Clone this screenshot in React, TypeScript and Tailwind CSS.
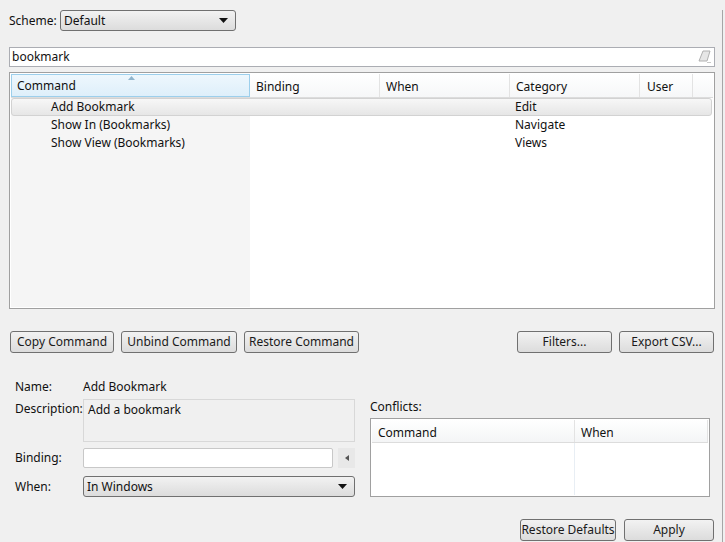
import React from 'react';

const font = { fontFamily: '"Noto Sans", "Open Sans", "Liberation Sans", sans-serif' };

const Btn = ({ label, w }: { label: string; w: string }) => (
  <button
    className={`${w} h-[22px] rounded-[3px] border border-[#707070] bg-gradient-to-b from-[#f2f2f2] to-[#dcdcdc] text-[12px] text-[#1a1a1a] leading-none`}
  >
    {label}
  </button>
);

const Caret = () => (
  <svg width="9" height="5" viewBox="0 0 9 5">
    <path d="M0 0h9L4.5 5z" fill="#111" />
  </svg>
);

const Select = ({ value, w }: { value: string; w: string }) => (
  <div
    className={`${w} h-[21px] rounded-[3px] border border-[#707070] bg-gradient-to-b from-[#f2f2f2] to-[#dcdcdc] flex items-center justify-between pl-[3px] pr-[7px] text-[12px]`}
  >
    <span>{value}</span>
    <Caret />
  </div>
);

const rows = [
  { cmd: 'Add Bookmark', cat: 'Edit', sel: true },
  { cmd: 'Show In (Bookmarks)', cat: 'Navigate' },
  { cmd: 'Show View (Bookmarks)', cat: 'Views' },
];

export default function App() {
  return (
    <div className="w-[725px] h-[542px] overflow-hidden bg-[#f0f0f0] text-[#111]" style={font}>
      <div className="w-[723px] h-full border-r border-[#a6a6a6] pl-[9px] pr-[7px]">
        {/* scheme */}
        <div className="flex items-center h-[21px] mt-[10px] text-[12px]">
          <span className="w-[51px]">Scheme:</span>
          <Select value="Default" w="w-[176px]" />
        </div>

        {/* filter */}
        <div className="mt-[16px] h-[20px] border border-[#abadb3] bg-white flex items-center justify-between pl-[2px] pr-[2px] text-[12px]">
          <span>bookmark</span>
          <svg width="14" height="14" viewBox="0 0 14 14">
            <path d="M5 1h7l-3 10H1z" fill="#e6e6e6" stroke="#b0b0b0" strokeWidth="1" />
            <path d="M9 12.5h4" stroke="#c8c8c8" />
          </svg>
        </div>

        {/* commands table */}
        <div className="mt-[5px] h-[237px] border border-[#a0a0a0] bg-white p-px flex flex-col text-[12px]">
          <div className="flex h-[24px] bg-gradient-to-b from-white to-[#f6f7f8] border-b border-[#dcdcdc]">
            <div className="relative w-[239px] flex items-end pb-[1px] pl-[5px] bg-gradient-to-b from-[#eef7fd] to-[#deeffa] border border-[#9ccfec]">
              Command
              <svg className="absolute left-[116px] top-[1px]" width="7" height="4" viewBox="0 0 7 4">
                <path d="M0 4L3.5 0L7 4z" fill="#8fb4cc" />
              </svg>
            </div>
            <div className="w-[130px] flex items-end pb-[1px] pl-[6px] border-r border-[#e3e3e3]">Binding</div>
            <div className="w-[130px] flex items-end pb-[1px] pl-[6px] border-r border-[#e3e3e3]">When</div>
            <div className="w-[130px] flex items-end pb-[1px] pl-[6px] border-r border-[#e3e3e3]">Category</div>
            <div className="w-[53px] flex items-end pb-[1px] pl-[7px] border-r border-[#e3e3e3]">User</div>
            <div className="flex-1" />
          </div>
          <div className="relative flex-1">
            <div className="absolute left-0 top-0 bottom-0 w-[239px] bg-[#f5f5f5]" />
            <div className="relative">
              {rows.map((r) => (
                <div
                  key={r.cmd}
                  className={`flex h-[18px] items-center ${
                    r.sel
                      ? 'rounded-[3px] border border-[#d2d2d2] bg-gradient-to-b from-[#f7f7f7] to-[#e6e6e6] mr-px'
                      : 'border border-transparent'
                  }`}
                >
                  <div className="w-[503px] pl-[39px]">{r.cmd}</div>
                  <div>{r.cat}</div>
                </div>
              ))}
            </div>
          </div>
        </div>

        {/* command buttons */}
        <div className="mt-[22px] flex items-center">
          <div className="ml-px flex gap-[7px]">
            <Btn label="Copy Command" w="w-[104px]" />
            <Btn label="Unbind Command" w="w-[116px]" />
            <Btn label="Restore Command" w="w-[115px]" />
          </div>
          <div className="ml-auto flex gap-[7px] mr-px">
            <Btn label="Filters..." w="w-[95px]" />
            <Btn label="Export CSV..." w="w-[95px]" />
          </div>
        </div>

        {/* details */}
        <div className="mt-[26px] flex text-[12px]">
          <div className="w-[346px] pl-[6px]">
            <div className="flex h-[16px] items-center">
              <span className="w-[68px]">Name:</span>
              <span>Add Bookmark</span>
            </div>
            <div className="flex mt-[4px]">
              <span className="w-[68px] pt-[1px]">Description:</span>
              <div className="w-[272px] h-[43px] border border-[#d8d8d8] bg-[#f0f0f0] px-[4px] pt-[1px]">
                Add a bookmark
              </div>
            </div>
            <div className="flex mt-[6px] items-center">
              <span className="w-[68px]">Binding:</span>
              <div className="w-[250px] h-[20px] border border-[#c8c8c8] rounded-[2px] bg-white" />
              <div className="ml-[5px] w-[17px] h-[20px] bg-[#e8e8e8] flex items-center justify-center">
                <svg width="4" height="6" viewBox="0 0 4 6">
                  <path d="M4 0v6L0 3z" fill="#555" />
                </svg>
              </div>
            </div>
            <div className="flex mt-[8px] items-center">
              <span className="w-[68px]">When:</span>
              <Select value="In Windows" w="w-[272px]" />
            </div>
          </div>
          <div className="ml-[15px] w-[340px] pt-[20px]">
            <div className="h-[16px] leading-[16px]">Conflicts:</div>
            <div className="mt-[3px] h-[79px] border border-[#a0a0a0] bg-white p-px flex flex-col">
              <div className="flex h-[23px] bg-gradient-to-b from-white to-[#f4f5f6] border-b border-[#dcdcdc]">
                <div className="w-[203px] flex items-end pb-0 pl-[6px] border-r border-[#e3e3e3]">Command</div>
                <div className="flex-1 flex items-end pb-0 pl-[6px] border-r border-[#e3e3e3]">When</div>
              </div>
              <div className="flex-1 flex">
                <div className="w-[203px] border-r border-[#e8eef4]" />
                <div className="flex-1" />
              </div>
            </div>
          </div>
        </div>

        {/* bottom buttons */}
        <div className="mt-[22px] flex justify-end gap-[8px] mr-px">
          <Btn label="Restore Defaults" w="w-[96px]" />
          <Btn label="Apply" w="w-[90px]" />
        </div>
      </div>
    </div>
  );
}
